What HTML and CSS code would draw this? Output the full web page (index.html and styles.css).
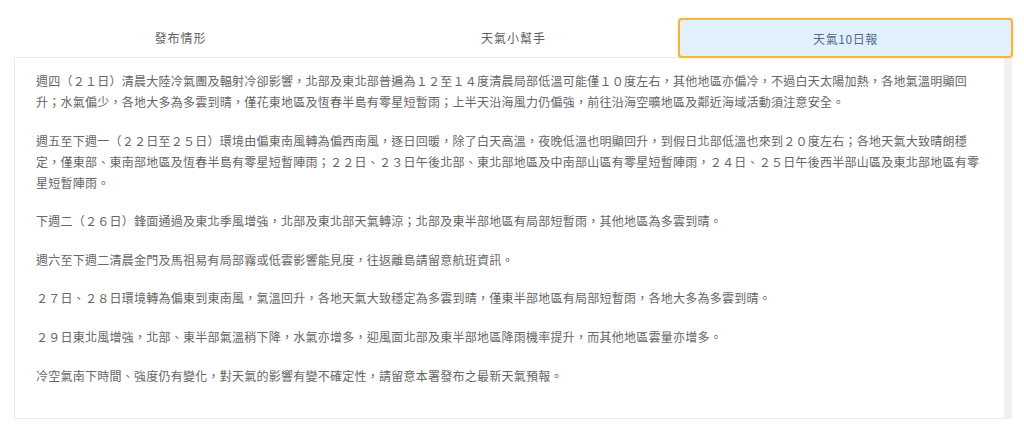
FILE: index.html
```html
<!DOCTYPE html>
<html lang="zh-Hant">
<head>
    <meta charset="UTF-8">
    <meta name="viewport" content="width=device-width, initial-scale=1.0">
    <title>天氣10日報</title>
    <link rel="stylesheet" href="styles.css">
</head>
<body>

    <div class="wrap">
        <!-- Tabs -->
        <div class="tabs">
            <button class="tab">發布情形</button>
            <button class="tab">天氣小幫手</button>
            <button class="tab active">天氣10日報</button>
        </div>

        <!-- 10 day forecast text -->
        <div class="panel">
            <div class="content">
                <p>週四（２１日）清晨大陸冷氣團及輻射冷卻影響，北部及東北部普遍為１２至１４度清晨局部低溫可能僅１０度左右，其他地區亦偏冷，不過白天太陽加熱，各地氣溫明顯回升；水氣偏少，各地大多為多雲到晴，僅花東地區及恆春半島有零星短暫雨；上半天沿海風力仍偏強，前往沿海空曠地區及鄰近海域活動須注意安全。</p>
                <p>週五至下週一（２２日至２５日）環境由偏東南風轉為偏西南風，逐日回暖，除了白天高溫，夜晚低溫也明顯回升，到假日北部低溫也來到２０度左右；各地天氣大致晴朗穩定，僅東部、東南部地區及恆春半島有零星短暫陣雨；２２日、２３日午後北部、東北部地區及中南部山區有零星短暫陣雨，２４日、２５日午後西半部山區及東北部地區有零星短暫陣雨。</p>
                <p>下週二（２６日）鋒面通過及東北季風增強，北部及東北部天氣轉涼；北部及東半部地區有局部短暫雨，其他地區為多雲到晴。</p>
                <p>週六至下週二清晨金門及馬祖易有局部霧或低雲影響能見度，往返離島請留意航班資訊。</p>
                <p>２７日、２８日環境轉為偏東到東南風，氣溫回升，各地天氣大致穩定為多雲到晴，僅東半部地區有局部短暫雨，各地大多為多雲到晴。</p>
                <p>２９日東北風增強，北部、東半部氣溫稍下降，水氣亦增多，迎風面北部及東半部地區降雨機率提升，而其他地區雲量亦增多。</p>
                <p>冷空氣南下時間、強度仍有變化，對天氣的影響有變不確定性，請留意本署發布之最新天氣預報。</p>
            </div>
        </div>
    </div>

</body>
</html>
```

FILE: styles.css
```css
body {
    margin: 0;
    padding: 0;
    background-color: #fff;
    color: #666;
    font-family: "Noto Sans CJK TC", "Noto Sans", sans-serif;
}
.wrap {
    width: 999px;
    padding: 18px 0 0 14px;
}
.tabs {
    display: grid;
    grid-template-columns: 1fr 1fr 1fr;
    height: 40px;
}
.tab {
    font-family: inherit;
    font-size: 12px;
    letter-spacing: 1px;
    color: #5f5f5f;
    background: none;
    border: none;
    border-bottom: 1px solid #e6eef3;
    padding: 0;
    cursor: pointer;
}
.tab.active {
    margin-left: -2px;
    background-color: #e2f0fc;
    color: #4f6e8c;
    letter-spacing: 0.6px;
    border: 2px solid #f5b63f;
    border-radius: 4px;
    box-shadow: 0 0 2px rgba(245, 182, 63, 0.7);
}
.panel {
    border: 1px solid #e1ecf3;
    border-top: none;
    border-right: 8px solid #eef2f6;
    box-sizing: border-box;
    width: 998px;
    height: 361px;
    padding: 12px 0 0 21px;
}
.content {
    width: 948px;
    font-size: 12px;
    letter-spacing: 0.25px;
    line-height: 21px;
}
.content p {
    margin: 0 0 17.6px;
}
```
